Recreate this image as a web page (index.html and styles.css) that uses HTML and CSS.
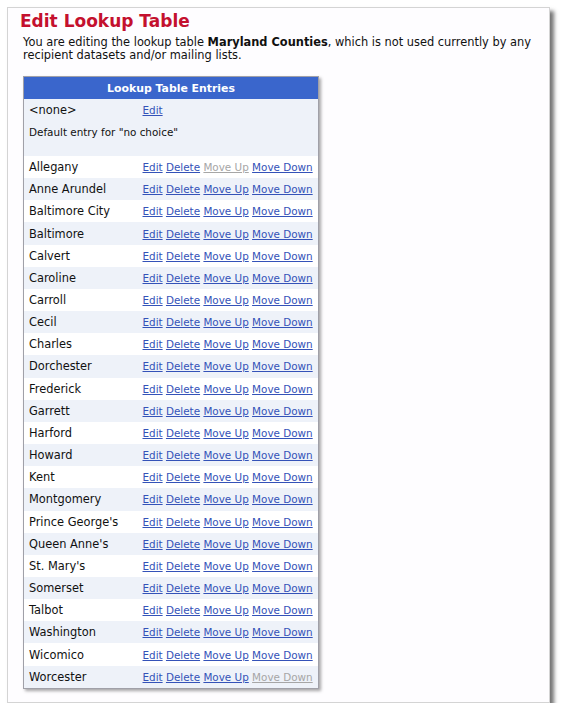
FILE: index.html
```html
<!DOCTYPE html>
<html>
<head>
<meta charset="utf-8">
<link rel="stylesheet" href="styles.css">
</head>
<body>
<div class="card">
  <h1 class="title">Edit Lookup Table</h1>
  <p class="intro">You are editing the lookup table <b>Maryland Counties</b>, which is not used currently by any recipient datasets and/or mailing lists.</p>
  <table class="entries">
    <colgroup><col class="c-name"><col class="c-acts"></colgroup>
    <thead>
      <tr><th colspan="2">Lookup Table Entries</th></tr>
    </thead>
    <tbody>
      <tr class="none-row"><td class="name">&lt;none&gt;</td><td class="acts"><a href="#">Edit</a></td></tr>
      <tr class="default-row"><td colspan="2">Default entry for "no choice"</td></tr>
      <tr class="row"><td class="name">Allegany</td><td class="acts"><a href="#">Edit</a> <a href="#">Delete</a> <span class="off">Move Up</span> <a href="#">Move Down</a></td></tr>
      <tr class="row alt"><td class="name">Anne Arundel</td><td class="acts"><a href="#">Edit</a> <a href="#">Delete</a> <a href="#">Move Up</a> <a href="#">Move Down</a></td></tr>
      <tr class="row"><td class="name">Baltimore City</td><td class="acts"><a href="#">Edit</a> <a href="#">Delete</a> <a href="#">Move Up</a> <a href="#">Move Down</a></td></tr>
      <tr class="row alt"><td class="name">Baltimore</td><td class="acts"><a href="#">Edit</a> <a href="#">Delete</a> <a href="#">Move Up</a> <a href="#">Move Down</a></td></tr>
      <tr class="row"><td class="name">Calvert</td><td class="acts"><a href="#">Edit</a> <a href="#">Delete</a> <a href="#">Move Up</a> <a href="#">Move Down</a></td></tr>
      <tr class="row alt"><td class="name">Caroline</td><td class="acts"><a href="#">Edit</a> <a href="#">Delete</a> <a href="#">Move Up</a> <a href="#">Move Down</a></td></tr>
      <tr class="row"><td class="name">Carroll</td><td class="acts"><a href="#">Edit</a> <a href="#">Delete</a> <a href="#">Move Up</a> <a href="#">Move Down</a></td></tr>
      <tr class="row alt"><td class="name">Cecil</td><td class="acts"><a href="#">Edit</a> <a href="#">Delete</a> <a href="#">Move Up</a> <a href="#">Move Down</a></td></tr>
      <tr class="row"><td class="name">Charles</td><td class="acts"><a href="#">Edit</a> <a href="#">Delete</a> <a href="#">Move Up</a> <a href="#">Move Down</a></td></tr>
      <tr class="row alt"><td class="name">Dorchester</td><td class="acts"><a href="#">Edit</a> <a href="#">Delete</a> <a href="#">Move Up</a> <a href="#">Move Down</a></td></tr>
      <tr class="row"><td class="name">Frederick</td><td class="acts"><a href="#">Edit</a> <a href="#">Delete</a> <a href="#">Move Up</a> <a href="#">Move Down</a></td></tr>
      <tr class="row alt"><td class="name">Garrett</td><td class="acts"><a href="#">Edit</a> <a href="#">Delete</a> <a href="#">Move Up</a> <a href="#">Move Down</a></td></tr>
      <tr class="row"><td class="name">Harford</td><td class="acts"><a href="#">Edit</a> <a href="#">Delete</a> <a href="#">Move Up</a> <a href="#">Move Down</a></td></tr>
      <tr class="row alt"><td class="name">Howard</td><td class="acts"><a href="#">Edit</a> <a href="#">Delete</a> <a href="#">Move Up</a> <a href="#">Move Down</a></td></tr>
      <tr class="row"><td class="name">Kent</td><td class="acts"><a href="#">Edit</a> <a href="#">Delete</a> <a href="#">Move Up</a> <a href="#">Move Down</a></td></tr>
      <tr class="row alt"><td class="name">Montgomery</td><td class="acts"><a href="#">Edit</a> <a href="#">Delete</a> <a href="#">Move Up</a> <a href="#">Move Down</a></td></tr>
      <tr class="row"><td class="name">Prince George's</td><td class="acts"><a href="#">Edit</a> <a href="#">Delete</a> <a href="#">Move Up</a> <a href="#">Move Down</a></td></tr>
      <tr class="row alt"><td class="name">Queen Anne's</td><td class="acts"><a href="#">Edit</a> <a href="#">Delete</a> <a href="#">Move Up</a> <a href="#">Move Down</a></td></tr>
      <tr class="row"><td class="name">St. Mary's</td><td class="acts"><a href="#">Edit</a> <a href="#">Delete</a> <a href="#">Move Up</a> <a href="#">Move Down</a></td></tr>
      <tr class="row alt"><td class="name">Somerset</td><td class="acts"><a href="#">Edit</a> <a href="#">Delete</a> <a href="#">Move Up</a> <a href="#">Move Down</a></td></tr>
      <tr class="row"><td class="name">Talbot</td><td class="acts"><a href="#">Edit</a> <a href="#">Delete</a> <a href="#">Move Up</a> <a href="#">Move Down</a></td></tr>
      <tr class="row alt"><td class="name">Washington</td><td class="acts"><a href="#">Edit</a> <a href="#">Delete</a> <a href="#">Move Up</a> <a href="#">Move Down</a></td></tr>
      <tr class="row"><td class="name">Wicomico</td><td class="acts"><a href="#">Edit</a> <a href="#">Delete</a> <a href="#">Move Up</a> <a href="#">Move Down</a></td></tr>
      <tr class="row alt"><td class="name">Worcester</td><td class="acts"><a href="#">Edit</a> <a href="#">Delete</a> <a href="#">Move Up</a> <span class="off">Move Down</span></td></tr>
    </tbody>
  </table>
</div>
</body>
</html>
```

FILE: styles.css
```css
html, body {
  margin: 0;
  padding: 0;
  background: #ffffff;
}
body {
  font-family: "DejaVu Sans", Verdana, sans-serif;
  font-size: 11px;
  color: #111;
}
.card {
  margin: 7px 0 0 7px;
  width: 543px;
  height: 696px;
  box-sizing: border-box;
  border: 1px solid #d4d4d4;
  background: #fefdff;
  box-shadow: 4px 4px 4px rgba(0,0,0,0.55);
  padding: 3px 0 0 12px;
}
.title {
  margin: 0;
  font-size: 17px;
  line-height: 20px;
  font-weight: bold;
  color: #c4102e;
}
.intro {
  margin: 5px 0 0 3px;
  width: 520px;
  font-size: 11.4px;
  line-height: 13px;
}
.entries {
  margin: 14px 0 0 3px;
  width: 296px;
  table-layout: fixed;
  border-collapse: collapse;
  border: 1px solid #a0a0a8;
  box-shadow: 2px 2px 3px rgba(0,0,0,0.35);
  background: #eef2f9;
}
.c-name {
  width: 119px;
}
.entries th {
  background: #3a66cc;
  color: #fff;
  font-size: 10.9px;
  font-weight: bold;
  height: 22px;
  padding: 0;
  text-align: center;
}
.entries td {
  padding: 0;
  font-size: 11.4px;
  white-space: nowrap;
}
.entries td.name {
  padding-left: 5px;
}
.none-row td {
  height: 22px;
}
.entries .default-row td {
  height: 30px;
  vertical-align: top;
  padding: 5px 0 0 5px;
  font-size: 10.4px;
}
.row td {
  height: 22.17px;
  background: #ffffff;
}
.row.alt td {
  background: #eef2f9;
}
.entries td.acts {
  font-size: 10.4px;
}
.acts a {
  color: #3452b8;
  text-decoration: underline;
}
.acts .off {
  color: #a6a6a6;
  text-decoration: underline;
}
```
